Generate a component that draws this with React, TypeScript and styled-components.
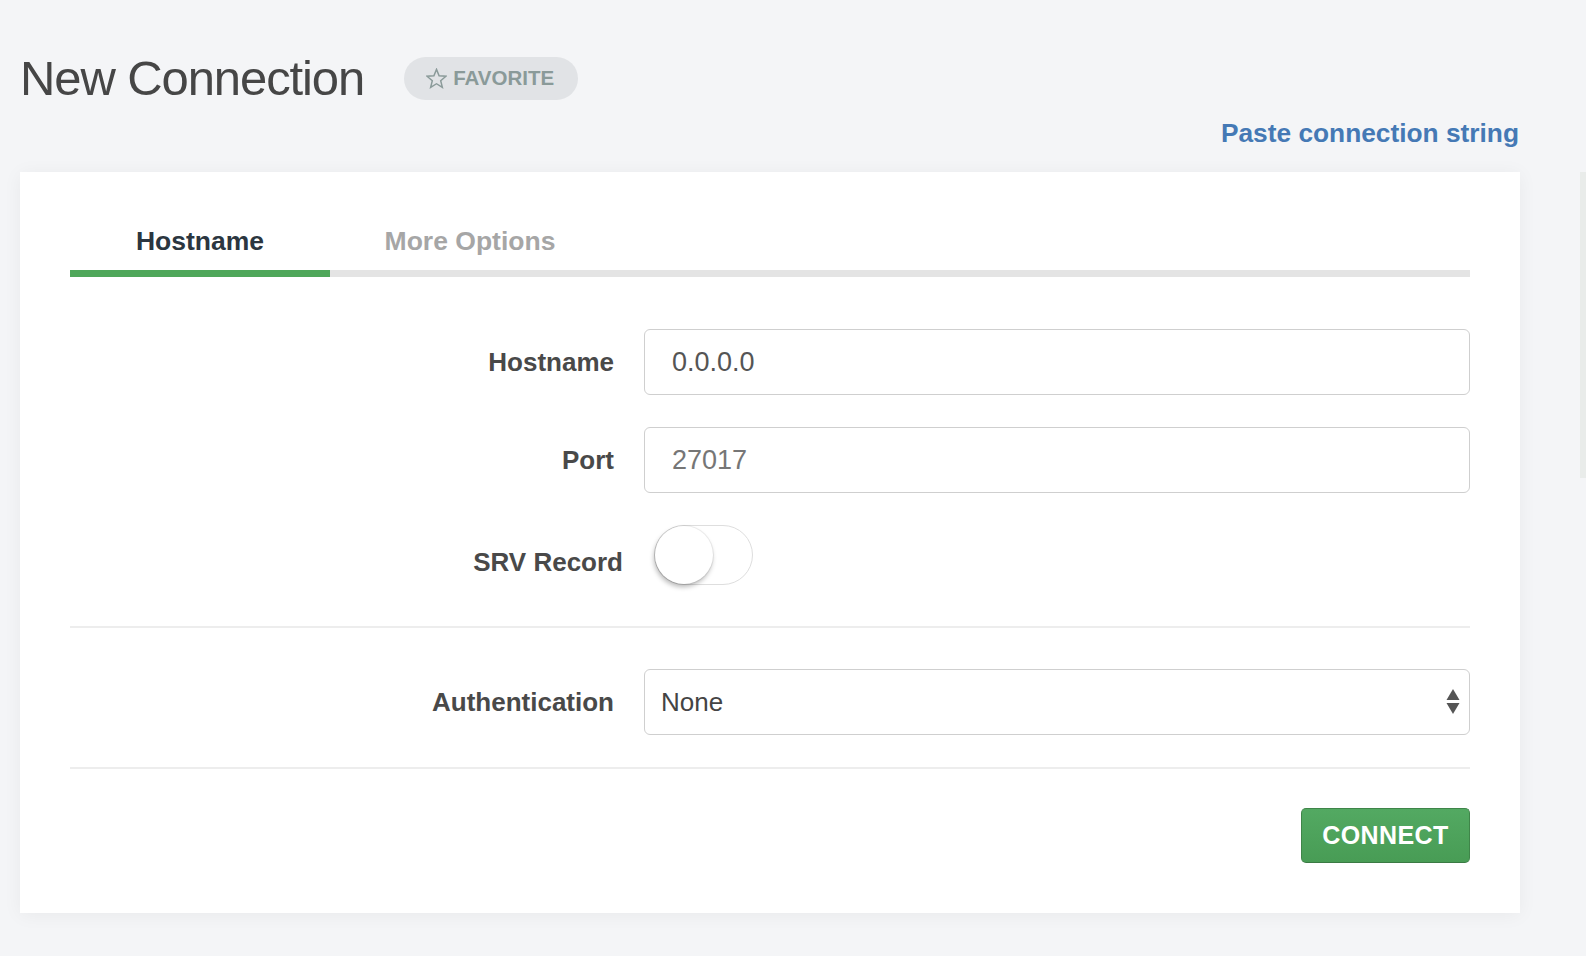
import React from 'react';
import styled, { createGlobalStyle } from 'styled-components';

const GlobalStyle = createGlobalStyle`
  html, body {
    margin: 0;
    padding: 0;
    background: #f4f5f7;
    font-family: "Liberation Sans", Arial, sans-serif;
  }
`;

const StarIcon = () => (
  <svg width="21" height="21" viewBox="0 0 20 20">
    <polygon
      points="10,1.3 12.47,7.4 19.03,7.86 13.99,12.1 15.58,18.49 10,15 4.42,18.49 6.01,12.1 0.97,7.86 7.53,7.4"
      fill="none"
      stroke="#8a9a99"
      strokeWidth="1.4"
      strokeLinejoin="miter"
    />
  </svg>
);

const SelectArrows = () => (
  <svg width="14" height="26" viewBox="0 0 14 26">
    <polygon points="7,0 13.5,11 0.5,11" fill="#555" />
    <polygon points="0.5,14 13.5,14 7,25" fill="#555" />
  </svg>
);

const App = () => {
  return (
    <>
      <GlobalStyle />
      <Page>
        <Main>
          <TitleRow>
            <Title>New Connection</Title>
            <FavoriteButton>
              <StarIcon />
              FAVORITE
            </FavoriteButton>
          </TitleRow>
          <LinkRow>
            <PasteLink href="#">Paste connection string</PasteLink>
          </LinkRow>
          <Card>
            <TabBar>
              <Tab active width={260}>Hostname</Tab>
              <Tab width={280}>More Options</Tab>
              <TabRest />
            </TabBar>

            <Section top={52} bottom={41}>
              <Row>
                <Label width={544}>Hostname</Label>
                <TextInput defaultValue="0.0.0.0" />
              </Row>
              <Row>
                <Label width={544}>Port</Label>
                <TextInput placeholder="27017" />
              </Row>
              <Row>
                <Label width={553} nudge={14}>SRV Record</Label>
                <Toggle>
                  <Knob />
                </Toggle>
              </Row>
            </Section>

            <Divider />

            <Section top={41} bottom={32}>
              <Row>
                <Label width={544}>Authentication</Label>
                <SelectWrap>
                  <Select defaultValue="none">
                    <option value="none">None</option>
                    <option value="userpass">Username / Password</option>
                    <option value="kerberos">Kerberos</option>
                    <option value="ldap">LDAP</option>
                    <option value="x509">X.509</option>
                  </Select>
                  <ArrowBox>
                    <SelectArrows />
                  </ArrowBox>
                </SelectWrap>
              </Row>
            </Section>

            <Divider />

            <Footer>
              <ConnectButton>CONNECT</ConnectButton>
            </Footer>
          </Card>
        </Main>
        <SideEdge />
      </Page>
    </>
  );
};

export default App;

const Page = styled.div`
  display: flex;
  width: 1586px;
  min-height: 956px;
  background: #f4f5f7;
  overflow: hidden;
`;
const Main = styled.div`
  width: 1500px;
  padding: 57px 60px 0 20px;
  flex-shrink: 0;
`;
const SideEdge = styled.div`
  width: 6px;
  height: 306px;
  margin-top: 172px;
  background: #e9ecea;
`;
const TitleRow = styled.div`
  display: flex;
  align-items: center;
  height: 42px;
`;
const Title = styled.h1`
  margin: 0;
  font-size: 49px;
  line-height: 50px;
  font-weight: 400;
  letter-spacing: -1.1px;
  color: #464646;
`;
const FavoriteButton = styled.button`
  display: flex;
  align-items: center;
  gap: 6px;
  height: 43px;
  margin-left: 40px;
  padding: 0 24px 0 22px;
  border: none;
  border-radius: 22px;
  background: #e1e3e6;
  color: #8a9a99;
  font-family: "Liberation Sans", Arial, sans-serif;
  font-size: 20.5px;
  font-weight: 700;
  cursor: pointer;
`;
const LinkRow = styled.div`
  display: flex;
  justify-content: flex-end;
  margin-top: 19px;
  height: 30px;
`;
const PasteLink = styled.a`
  font-size: 26.3px;
  line-height: 30px;
  font-weight: 700;
  color: #4579b5;
  text-decoration: none;
  padding-right: 1px;
`;
const Card = styled.div`
  margin-top: 24px;
  background: #ffffff;
  padding: 0 50px 50px;
  box-shadow: 0 2px 18px rgba(0, 0, 0, 0.05);
`;
const TabBar = styled.div`
  display: flex;
  padding-top: 40px;
`;
const Tab = styled.div<{ active?: boolean; width: number }>`
  width: ${(p) => p.width}px;
  height: 58px;
  line-height: 58px;
  text-align: center;
  font-size: 26.5px;
  font-weight: 700;
  color: ${(p) => (p.active ? '#2b3640' : '#a6a6a6')};
  border-bottom: 7px solid ${(p) => (p.active ? '#4fa75a' : '#e4e4e4')};
  cursor: pointer;
`;
const TabRest = styled.div`
  flex: 1;
  border-bottom: 7px solid #e4e4e4;
`;
const Section = styled.div<{ top: number; bottom: number }>`
  display: flex;
  flex-direction: column;
  gap: 32px;
  padding-top: ${(p) => p.top}px;
  padding-bottom: ${(p) => p.bottom}px;
`;
const Row = styled.div`
  display: flex;
  align-items: center;
`;
const Label = styled.label<{ width: number; nudge?: number }>`
  width: ${(p) => p.width + 30}px;
  flex-shrink: 0;
  padding-right: 30px;
  padding-top: ${(p) => p.nudge ?? 0}px;
  box-sizing: border-box;
  text-align: right;
  font-size: 26px;
  font-weight: 700;
  color: #494949;
`;
const TextInput = styled.input`
  flex: 1;
  height: 66px;
  box-sizing: border-box;
  padding: 0 27px;
  border: 1.5px solid #cfcfcf;
  border-radius: 6px;
  font-family: "Liberation Sans", Arial, sans-serif;
  font-size: 27px;
  color: #555555;
  outline: none;
  &::placeholder {
    color: #767676;
  }
`;
const Toggle = styled.div`
  display: flex;
  align-items: center;
  width: 99px;
  height: 60px;
  box-sizing: border-box;
  border: 1.5px solid #dedede;
  border-radius: 30px;
  background: #ffffff;
  margin-left: 1px;
`;
const Knob = styled.div`
  width: 58px;
  height: 58px;
  margin-left: -0.5px;
  border-radius: 50%;
  background: #ffffff;
  box-shadow: -1px 3px 5px rgba(0, 0, 0, 0.28), 0 0 0 1px rgba(0, 0, 0, 0.06);
`;
const Divider = styled.div`
  height: 2px;
  background: #ededed;
`;
const SelectWrap = styled.div`
  position: relative;
  flex: 1;
  display: flex;
`;
const Select = styled.select`
  flex: 1;
  height: 66px;
  padding: 0 40px 0 16px;
  appearance: none;
  -webkit-appearance: none;
  border: 1.5px solid #cfcfcf;
  border-radius: 6px;
  background: #ffffff;
  font-family: "Liberation Sans", Arial, sans-serif;
  font-size: 26px;
  color: #444444;
  outline: none;
`;
const ArrowBox = styled.span`
  position: absolute;
  right: 10px;
  top: 20px;
  display: flex;
  pointer-events: none;
`;
const Footer = styled.div`
  display: flex;
  justify-content: flex-end;
  padding-top: 39px;
`;
const ConnectButton = styled.button`
  width: 169px;
  height: 55px;
  border: 1.5px solid #3f8549;
  border-bottom-color: #3a7a43;
  border-radius: 5px;
  background: linear-gradient(#53a962, #489c55);
  color: #ffffff;
  font-family: "Liberation Sans", Arial, sans-serif;
  font-size: 25px;
  font-weight: 700;
  letter-spacing: 0.4px;
  cursor: pointer;
`;
